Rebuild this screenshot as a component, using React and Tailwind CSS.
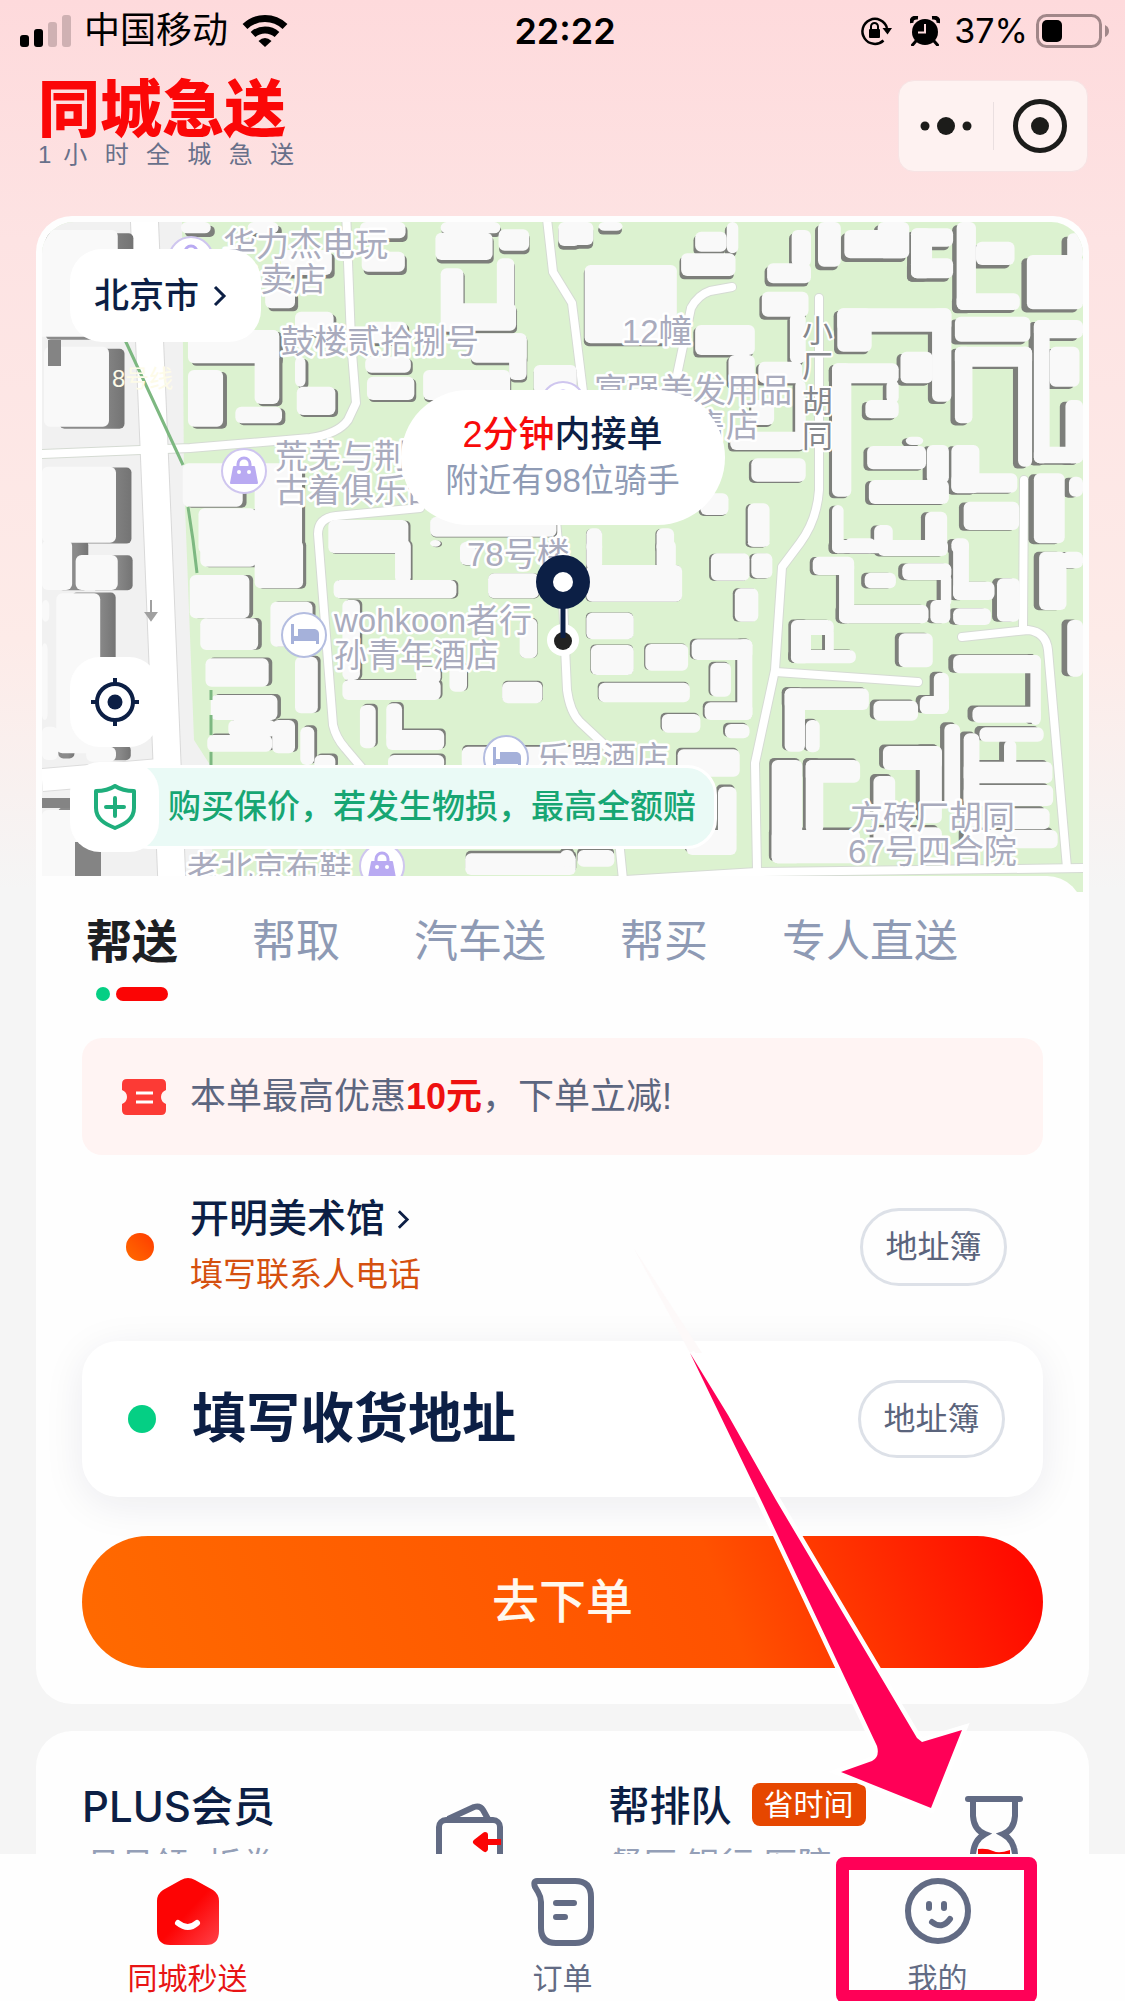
import React, { useState } from "react";

const tabs = ["帮送", "帮取", "汽车送", "帮买", "专人直送"];

// Every tile lists its buildings as [left, top, right, bottom] in tile units
const tiles = [
  {
    x: 30,
    y: 200,
    blocks: [
      [0, 90, 250, 410], [40, 440, 225, 680], [34, 800, 245, 1028], [430, 66, 515, 100], [620, 66, 708, 100],
      [715, 150, 860, 225], [670, 270, 755, 325], [940, 66, 1070, 115], [945, 155, 1068, 215], [1170, 66, 1340, 100],
      [1155, 98, 1318, 180], [1335, 88, 1422, 152], [1170, 205, 1235, 395], [1330, 175, 1380, 340],
      [1180, 310, 1385, 392], [1505, 66, 1568, 138], [1255, 400, 1415, 488], [1365, 400, 1415, 540],
      [1120, 510, 1368, 600], [1435, 495, 1558, 580], [450, 390, 710, 490], [640, 390, 710, 612],
      [450, 510, 550, 680], [585, 620, 718, 670], [755, 335, 865, 405], [755, 470, 785, 560], [760, 560, 870, 645],
      [955, 365, 1075, 430], [955, 470, 1085, 518], [960, 530, 1095, 600], [435, 790, 606, 920],
      [480, 925, 645, 1060], [640, 790, 775, 1060], [850, 960, 1078, 1060], [1140, 950, 1500, 1010],
    ],
  },
  {
    x: 560,
    y: 200,
    blocks: [
      [0, 66, 95, 135], [110, 66, 178, 92], [385, 95, 475, 155], [475, 66, 508, 160], [345, 160, 500, 228],
      [660, 90, 715, 200], [590, 190, 715, 250], [575, 275, 708, 350], [655, 340, 700, 490], [735, 66, 800, 200],
      [810, 90, 990, 175], [905, 66, 995, 175], [1000, 85, 1060, 235], [1000, 85, 1120, 140], [1000, 175, 1120, 235],
      [1130, 66, 1185, 330], [1130, 280, 1310, 330], [1185, 125, 1295, 195], [1330, 165, 1490, 328],
      [1445, 100, 1490, 180], [70, 195, 333, 430], [385, 375, 555, 465], [480, 465, 555, 560], [565, 485, 690, 550],
      [670, 540, 700, 720], [485, 695, 700, 750], [545, 775, 700, 845], [545, 600, 610, 675], [535, 910, 597, 1040],
      [400, 880, 480, 945], [75, 985, 120, 1060], [275, 985, 325, 1060], [790, 325, 1115, 395], [790, 325, 888, 455],
      [1060, 325, 1115, 605], [970, 455, 1062, 550], [775, 490, 965, 550], [775, 490, 830, 890], [930, 540, 965, 610],
      [870, 600, 965, 655], [1125, 350, 1340, 425], [1125, 440, 1345, 500], [1125, 440, 1175, 670],
      [1305, 440, 1345, 800], [1350, 360, 1490, 415], [1350, 360, 1395, 790], [1395, 440, 1480, 560],
      [1440, 600, 1490, 790], [1350, 740, 1490, 790], [985, 710, 1035, 735], [875, 738, 1043, 808],
      [1045, 735, 1108, 850], [880, 840, 1108, 912], [1115, 735, 1195, 880], [1115, 820, 1303, 878],
      [1150, 905, 1308, 990], [1350, 820, 1438, 1030], [1450, 830, 1490, 890], [1040, 935, 1103, 1060],
      [775, 915, 808, 1060], [895, 975, 948, 1060], [810, 1015, 900, 1060], [900, 1025, 1105, 1060],
      [1115, 1015, 1165, 1060],
    ],
  },
  {
    x: 30,
    y: 540,
    blocks: [
      [34, 0, 120, 150], [130, 45, 250, 150], [75, 160, 200, 640], [34, 180, 55, 245], [34, 310, 50, 540],
      [34, 560, 80, 660], [160, 620, 245, 665], [34, 810, 150, 1050], [485, 0, 645, 80], [640, 0, 778, 145],
      [455, 105, 625, 235], [485, 235, 650, 330], [500, 355, 680, 440], [515, 465, 705, 540], [565, 540, 700, 590],
      [505, 585, 690, 635], [690, 540, 755, 640], [685, 185, 805, 320], [755, 350, 820, 520], [770, 560, 810, 675],
      [810, 645, 870, 690], [865, 120, 1215, 175], [1040, 0, 1085, 130], [890, 180, 940, 420], [890, 420, 1170, 480],
      [1195, 370, 1245, 455], [1100, 380, 1170, 430], [940, 495, 985, 625], [1015, 490, 1060, 610],
      [1015, 570, 1180, 630], [1020, 645, 1180, 690], [1395, 235, 1445, 355], [1345, 425, 1460, 490],
      [1230, 620, 1568, 690], [1240, 940, 1555, 1005], [1305, 100, 1450, 175], [1225, 5, 1270, 75],
      [1140, 0, 1170, 20],
    ],
  },
  {
    x: 560,
    y: 540,
    blocks: [
      [75, 0, 120, 90], [275, 0, 330, 90], [75, 75, 348, 185], [430, 40, 540, 122], [545, 40, 605, 115],
      [535, 0, 597, 20], [498, 145, 565, 245], [75, 218, 210, 298], [88, 315, 210, 405], [243, 312, 365, 392],
      [375, 298, 548, 360], [505, 298, 548, 540], [412, 487, 548, 540], [428, 368, 487, 470], [110, 428, 370, 487],
      [290, 522, 400, 578], [470, 552, 540, 595], [335, 628, 512, 710], [450, 740, 503, 900], [360, 870, 503, 945],
      [0, 930, 40, 980], [50, 930, 155, 980], [775, 0, 1105, 40], [905, 0, 1105, 48], [1120, 0, 1165, 180],
      [720, 50, 838, 105], [795, 60, 838, 250], [795, 195, 1050, 250], [868, 98, 957, 145], [975, 70, 1115, 120],
      [1120, 125, 1238, 180], [1055, 180, 1112, 250], [1120, 205, 1228, 255], [1245, 115, 1310, 245],
      [1085, 100, 1115, 200], [1365, 35, 1443, 210], [1430, 35, 1490, 85], [1445, 240, 1490, 410],
      [658, 240, 715, 370], [670, 240, 780, 285], [755, 260, 780, 350], [658, 330, 843, 370], [965, 280, 1062, 382],
      [1120, 345, 1370, 400], [1340, 345, 1370, 555], [1175, 500, 1370, 548], [1195, 562, 1378, 605],
      [1065, 398, 1108, 520], [1025, 468, 1108, 522], [893, 482, 1020, 542], [640, 445, 880, 510],
      [640, 445, 698, 635], [700, 540, 740, 637], [920, 618, 1088, 690], [1025, 618, 1088, 850],
      [1095, 552, 1140, 800], [1150, 580, 1195, 860], [1150, 665, 1403, 730], [1265, 600, 1300, 680],
      [1150, 735, 1405, 798], [1260, 805, 1395, 868], [1150, 870, 1418, 925], [893, 862, 1088, 920],
      [893, 708, 955, 850], [603, 660, 690, 970], [603, 870, 855, 970], [700, 660, 750, 880], [700, 660, 855, 728],
    ],
  },
];

const buildings = tiles.flatMap((tile) =>
  tile.blocks.map(([l, t, r, b]) => ({
    x: tile.x + l * 0.351,
    y: tile.y + t / 3,
    w: (r - l) * 0.351,
    h: (b - t) / 3,
  })),
);

const roads = [
  "M42 454L190 448L310 438Q338 434 348 420L356 403L351 340L346 210",
  "M546 210L553 272L572 303L577 343L584 400",
  "M556 520L563 600L565 647L567 690Q570 712 580 722L610 750L618 830L624 890",
  "M732 287L710 291Q698 295 691 308L677 375",
  "M819 298V490Q817 520 800 543L782 567L775 670L755 763L757 870",
  "M776 672L918 682",
  "M560 884L757 872L1090 868",
  "M1024 480L1023 630M962 637L1028 630Q1046 632 1048 650L1067 868",
  "M420 508L336 516Q318 518 318 534L333 725Q336 738 345 748L372 780",
];

const labels = [
  { x: 223, y: 256, text: "华力杰电玩" },
  { x: 227, y: 291, text: "专卖店" },
  { x: 281, y: 353, text: "鼓楼贰拾捌号" },
  { x: 275, y: 468, text: "荒芜与荆" },
  { x: 275, y: 502, text: "古着俱乐部" },
  { x: 467, y: 566, text: "78号楼" },
  { x: 334, y: 632, text: "wohkoon者行" },
  { x: 334, y: 667, text: "孙青年酒店" },
  { x: 537, y: 770, text: "乐盟酒店" },
  { x: 187, y: 880, text: "老北京布鞋" },
  { x: 622, y: 343, text: "12幢" },
  { x: 594, y: 402, text: "富强美发用品" },
  { x: 660, y: 437, text: "零售店" },
  { x: 850, y: 829, text: "方砖厂胡同" },
  { x: 848, y: 863, text: "67号四合院" },
];

const BagPoi = ({ x, y }) => (
  <g transform={`translate(${x} ${y})`}>
    <circle r="22" fill="#fff" stroke="#cfc6ef" strokeWidth="2" />
    <path d="M-10 -4H10L13 12H-13Z" fill="#b9aaf2" stroke="#b9aaf2" strokeWidth="2" strokeLinejoin="round" />
    <path d="M-6 -2V-7a6 6 0 0 1 12 0V-2" fill="none" stroke="#b9aaf2" strokeWidth="3" />
    <circle cx="-5" cy="1" r="2" fill="#fff" />
    <circle cx="5" cy="1" r="2" fill="#fff" />
  </g>
);

const BedPoi = ({ x, y }) => (
  <g transform={`translate(${x} ${y})`}>
    <circle r="22" fill="#fff" stroke="#b4bde0" strokeWidth="2" />
    <path d="M-13 -11h3v12h4v-7h17q4 1 4 5v10h-3v-3H-10v3h-3Z" fill="#a5b1da" />
  </g>
);

const CityMap = () => (
  <svg
    viewBox="42 222 1041 670"
    preserveAspectRatio="xMidYMid slice"
    className="block w-full h-[670px]"
    role="img"
    aria-label="地图"
  >
    <defs>
      <linearGradient id="wall" x1="0" y1="0" x2="1" y2="0">
        <stop offset="0.6" stopColor="#8b8b8b" />
        <stop offset="1" stopColor="#747474" />
      </linearGradient>
    </defs>
    <rect x="42" y="222" width="1041" height="670" fill="#dcf2d0" />
    <path d="M42 222H182L184 480L194 740L212 768V902H42Z" fill="#f1f1f1" />
    <path d="M144 210L158 540L173 910" fill="none" stroke="#d9d9d9" strokeWidth="29" />
    <path d="M42 780L160 770" fill="none" stroke="#dcdcdc" strokeWidth="24" />
    {roads.map((d) => (
      <path key={d} d={d} fill="none" stroke="#d5dbd3" strokeWidth="10" strokeLinecap="round" strokeLinejoin="round" />
    ))}
    {roads.map((d) => (
      <path key={d} d={d} fill="none" stroke="#fff" strokeWidth="8" strokeLinecap="round" strokeLinejoin="round" />
    ))}
    <path d="M42 780L160 770" fill="none" stroke="#fff" strokeWidth="22" />
    <path d="M144 210L158 540L173 910" fill="none" stroke="#fff" strokeWidth="27" />
    {buildings.map(({ x, y, w, h }, i) => {
      // walls lean towards the middle of the map, the tall blocks are in the west
      const lift = x < 180 ? 0.032 : 0.011;
      return (
        <rect
          key={i}
          x={x + (562 - x - w / 2) * lift}
          y={y + (600 - y - h / 2) * 0.01}
          width={w}
          height={h}
          rx="5"
          fill={x < 180 ? "url(#wall)" : "#7d7f7b"}
        />
      );
    })}
    {buildings.map(({ x, y, w, h }, i) => (
      <rect key={i} x={x} y={y} width={w} height={h} rx="6" fill="#f9f9f9" />
    ))}
    <path d="M48 340h13v26H48ZM42 798h35v10H42ZM75 842h26v50H75Z" fill="#848484" />
    <path
      d="M125 340L183 465M188 507L193 540L197 573M211 690V700M211 715V735M211 752V765"
      fill="none"
      stroke="#7db881"
      strokeWidth="3"
    />
    <path d="M151 600v16m-5 -3l5 7l5 -7Z" fill="#a0a0a0" stroke="#a0a0a0" strokeWidth="2" />

    <BagPoi x={191} y={259} />
    <BagPoi x={244} y={471} />
    <BagPoi x={382} y={866} />
    <BagPoi x={563} y={404} />
    <BedPoi x={304} y={635} />
    <BedPoi x={506} y={758} />

    <g fontSize="33" fill="#a9abbd" stroke="#fff" strokeWidth="5" strokeLinejoin="round" paintOrder="stroke">
      {labels.map((label) => (
        <text key={label.text} x={label.x} y={label.y}>
          {label.text}
        </text>
      ))}
    </g>
    <g fontSize="31" fill="#85878c" stroke="#fff" strokeWidth="4" strokeLinejoin="round" paintOrder="stroke">
      {["小", "厂", "胡", "同"].map((char, i) => (
        <text key={char} x="802" y={342 + i * 35}>
          {char}
        </text>
      ))}
    </g>
    <text x="112" y="387" fontSize="24" fill="#fdfbe8">
      8号线
    </text>

    <circle cx="563" cy="640" r="16" fill="#fff" />
    <circle cx="563" cy="641" r="9" fill="#222" />
    <path d="M563 600V638" stroke="#0c1f45" strokeWidth="5" />
    <circle cx="563" cy="582" r="27" fill="#0c1f45" />
    <circle cx="563" cy="582" r="10" fill="#fff" />
  </svg>
);

const Chevron = ({ className }) => (
  <svg viewBox="0 0 14 22" className={className} fill="none" stroke="currentColor" strokeWidth="3">
    <path d="M2 2L11 11L2 20" />
  </svg>
);

const StatusBar = () => (
  <div className="grid grid-cols-[1fr_auto_1fr] items-center h-[62px] pl-5 pr-[15px] text-black">
    <div className="flex items-center">
      <svg viewBox="0 0 52 34" className="w-[52px] h-[34px]">
        <rect x="0" y="21" width="9" height="12" rx="3" />
        <rect x="14" y="15" width="9" height="18" rx="3" />
        <rect x="28" y="8" width="9" height="25" rx="3" fill="#cfb1b3" />
        <rect x="42" y="1" width="9" height="32" rx="3" fill="#cfb1b3" />
      </svg>
      <span className="ml-3 text-[36px] leading-[44px]">中国移动</span>
      <svg viewBox="0 0 46 34" className="ml-3.5 w-[46px] h-[34px]" fill="none" stroke="#000" strokeWidth="7">
        <path d="M3 12.500A29 29 0 0 1 43 12.500" />
        <path d="M11 20.500A18 18 0 0 1 35 20.500" />
        <path d="M23 33L16.500 27Q23 21 29.500 27Z" fill="#000" stroke="none" />
      </svg>
    </div>
    <span className="font-['Inter',sans-serif] text-[36px] leading-[44px] font-semibold">22:22</span>
    <div className="flex items-center justify-end">
      <svg viewBox="0 0 32 30" className="w-8 h-[30px]" fill="none" stroke="#000" strokeWidth="2.500">
        <path d="M23.500 24.500A12.500 12.500 0 1 1 27 12" />
        <path d="M22.500 12H32L27.500 18.500Z" fill="#000" stroke="none" />
        <rect x="9" y="13" width="11" height="9" rx="1" fill="#000" stroke="none" />
        <path d="M11 14V10.500a3.500 3.500 0 0 1 7 0V14" strokeWidth="2" />
      </svg>
      <svg viewBox="0 0 30 30" className="ml-[18px] w-[30px] h-[30px]">
        <circle cx="15" cy="16" r="13" />
        <path d="M1.500 7Q1 1 8 1.500M28.500 7Q29 1 22 1.500" fill="none" stroke="#000" strokeWidth="4" />
        <path d="M6 25L2.500 29M24 25L27.500 29" stroke="#000" strokeWidth="3" strokeLinecap="round" />
        <path d="M15 8V16.500H8" fill="none" stroke="#fddbdd" strokeWidth="2" />
      </svg>
      <span className="ml-3.5 font-['Inter',sans-serif] text-[34px] leading-[44px]">37%</span>
      <svg viewBox="0 0 74 34" className="ml-2 w-[74px] h-[34px]">
        <rect x="1.500" y="1.500" width="63" height="31" rx="9" fill="none" stroke="#a18789" strokeWidth="3" />
        <rect x="6" y="6" width="20" height="22" rx="5" />
        <path d="M69 11Q73 13 73 17T69 23Z" fill="#a18789" />
      </svg>
    </div>
  </div>
);

const AddressButton = () => (
  <button
    type="button"
    className="shrink-0 w-[147px] h-[78px] rounded-full border-3 border-[#dde1e8] text-[32px] leading-10 text-[#5b647c]"
  >
    地址簿
  </button>
);

const Header = () => (
  <header className="flex items-start justify-between pt-[18px] pb-11 pl-[38px] pr-[37px]">
    <div className="w-[256px]">
      <h1 className="text-[62px] leading-[62px] font-black text-[#fb0707]">同城急送</h1>
      <p className="text-[24px] leading-[26px] text-[#68708a] [text-align-last:justify]">1 小 时 全 城 急 送</p>
    </div>
    <div className="flex items-center w-[190px] h-[92px] rounded-2xl border border-[#f7e3e4] bg-[#fef2f1]">
      <button type="button" aria-label="更多" className="flex flex-1 items-center justify-center">
        <svg viewBox="0 0 52 18" className="w-[52px] h-[18px]" fill="#1c1c1a">
          <circle cx="5" cy="9" r="4.500" />
          <circle cx="26" cy="9" r="9" />
          <circle cx="47" cy="9" r="4.500" />
        </svg>
      </button>
      <span className="w-px h-12 bg-[#eadfe0]" />
      <button type="button" aria-label="关闭" className="flex flex-1 items-center justify-center">
        <svg viewBox="0 0 54 54" className="w-[54px] h-[54px]">
          <circle cx="27" cy="27" r="24.500" fill="none" stroke="#1c1c1a" strokeWidth="5" />
          <circle cx="27" cy="27" r="9" fill="#1c1c1a" />
        </svg>
      </button>
    </div>
  </header>
);

const MapPanel = () => (
  <div className="relative overflow-hidden rounded-t-[32px]">
    <CityMap />
    <button
      type="button"
      className="absolute left-7 top-[27px] flex items-center gap-3.5 h-[93px] px-6 rounded-[32px] bg-white text-[35px] leading-[50px] font-medium text-[#0c1f45]"
    >
      北京市
      <Chevron className="w-[14px] h-[22px] mr-2.5" />
    </button>
    <div className="absolute left-1/2 top-[168px] -translate-x-1/2 flex flex-col items-center justify-center w-[324px] h-[135px] rounded-full bg-white">
      <p className="text-[36px] leading-[46px] font-medium text-[#0c1f45] whitespace-nowrap">
        <span className="text-[#f80b0b]">2分钟</span>内接单
      </p>
      <p className="text-[33px] leading-[46px] text-[#8f9bb5] whitespace-nowrap">附近有98位骑手</p>
    </div>
    <button
      type="button"
      aria-label="定位"
      className="absolute left-7 top-[435px] flex items-center justify-center w-[89px] h-[90px] rounded-[30px] bg-white"
    >
      <svg viewBox="0 0 48 48" className="w-12 h-12" fill="none" stroke="#0c1f45" strokeWidth="4">
        <circle cx="24" cy="24" r="18" />
        <circle cx="24" cy="24" r="7.500" fill="#0c1f45" stroke="none" />
        <path d="M24 0V8M24 40V48M0 24H8M40 24H48" />
      </svg>
    </button>
    <div className="absolute left-7 top-[540px] flex items-center">
      <span className="z-10 flex items-center justify-center w-[89px] h-[90px] rounded-[30px] bg-white">
        <svg
          viewBox="0 0 42 46"
          className="w-[42px] h-[46px]"
          fill="none"
          stroke="#1fae7c"
          strokeWidth="4"
          strokeLinecap="round"
          strokeLinejoin="round"
        >
          <path d="M21 2C27 6 33 7 40 7V24C40 35 31 40 21 44C11 40 2 35 2 24V7C9 7 15 6 21 2Z" />
          <path d="M21 14V32M12 23H30" />
        </svg>
      </span>
      <p className="-ml-10 pl-[46px] pr-[18px] h-[84px] border-3 border-white rounded-[30px] bg-[#eafaf6] text-[33px] leading-[78px] font-medium text-[#17a673] whitespace-nowrap">
        购买保价，若发生物损，最高全额赔
      </p>
    </div>
  </div>
);

const OrderPanel = () => {
  const [active, setActive] = useState(0);

  return (
    <div className="relative -mt-4 px-10 pt-9 pb-[30px] rounded-tr-[36px] rounded-b-[36px] bg-[#fefefe]">
      <div className="flex items-start gap-[74px] h-[89px] px-1 whitespace-nowrap">
        {tabs.map((tab, i) => (
          <button
            key={tab}
            type="button"
            onClick={() => setActive(i)}
            className={
              i === active
                ? "text-[46px] leading-[60px] font-bold text-[#1d2023]"
                : "text-[44px] leading-[60px] text-[#8e9ab4]"
            }
          >
            {tab}
            {i === active && (
              <span className="flex gap-1.5 mt-[15px] ml-2.5">
                <span className="w-3.5 h-3.5 rounded-full bg-[#05cf84]" />
                <span className="w-[52px] h-3.5 rounded-full bg-[#fb0505]" />
              </span>
            )}
          </button>
        ))}
      </div>

      <div className="flex items-center mt-[37px] h-[117px] pl-10 rounded-[20px] bg-[#fff4f3]">
        <svg viewBox="0 0 44 36" className="w-11 h-9">
          <path
            d="M5 0H39Q44 0 44 5V11Q39 13 39 18T44 25V31Q44 36 39 36H5Q0 36 0 31V25Q5 23 5 18T0 11V5Q0 0 5 0Z"
            fill="#fc3a35"
          />
          <path d="M14 14H31M14 23H31" stroke="#fff" strokeWidth="3" />
        </svg>
        <p className="ml-6 text-[36px] leading-[48px] text-[#5d667f]">
          本单最高优惠<strong className="font-bold text-[#ee1010]">10元</strong>，下单立减!
        </p>
      </div>

      <div className="flex items-center mt-9 pl-11 pr-9">
        <span className="w-7 h-7 rounded-full bg-linear-to-bl from-[#ff3800] to-[#ff6a00]" />
        <div className="flex-1 ml-9">
          <a href="#sender" className="flex items-center gap-3 text-[39px] leading-[56px] font-medium text-[#0c1f45]">
            开明美术馆
            <Chevron className="w-[13px] h-[21px]" />
          </a>
          <p className="text-[33px] leading-[56px] text-[#d5500f]">填写联系人电话</p>
        </div>
        <AddressButton />
      </div>

      <div className="flex items-center h-[156px] mt-[38px] pl-[46px] pr-[38px] rounded-[36px] bg-white shadow-[0_8px_40px_rgba(20,30,60,0.08)]">
        <span className="w-7 h-7 rounded-full bg-[#05cf84]" />
        <a href="#receiver" className="flex-1 ml-9 text-[54px] leading-[72px] font-bold text-[#0c1f45]">
          填写收货地址
        </a>
        <AddressButton />
      </div>

      <button
        type="button"
        className="block w-full h-[132px] mt-[39px] rounded-full bg-[linear-gradient(70deg,#ff6a00_0%,#ff5200_66%,#ff0a00_97%)] text-[47px] leading-[64px] font-medium text-[#fff8ee]"
      >
        去下单
      </button>
    </div>
  );
};

const Services = () => (
  <section className="grid grid-cols-2 mx-9 mt-[27px] h-[240px] pt-[48px] rounded-[36px] bg-[#fefefe]">
    <a href="#plus" className="flex justify-between pl-[46px] pr-[59px]">
      <div>
        <h2 className="font-['Inter','Noto_Sans_CJK_SC',sans-serif] text-[42px] leading-[56px] font-medium text-[#0c1f45]">
          PLUS会员
        </h2>
        <p className="mt-1.5 ml-1 text-[34px] leading-[48px] text-[#949fb7]">月月领9折券</p>
      </div>
      <svg viewBox="0 0 68 70" className="w-[68px] h-[70px] mt-6" fill="none" stroke="#626b84" strokeWidth="6">
        <rect x="3" y="17" width="61" height="50" rx="7" />
        <path d="M12 16L38 4Q44 2 47 7L52 16" strokeLinejoin="round" />
        <path d="M65 39H44" stroke="#fb0505" />
        <path d="M49 32L40 39L49 46Z" fill="#fb0505" stroke="#fb0505" strokeLinejoin="round" />
      </svg>
    </a>
    <a href="#queue" className="flex justify-between pl-[46px] pr-[66px]">
      <div>
        <div className="flex items-center gap-5">
          <h2 className="text-[41px] leading-[56px] font-medium text-[#0c1f45]">帮排队</h2>
          <span className="mb-1.5 w-[114px] h-[43px] rounded-lg bg-[#e64700] text-center text-[30px] leading-[43px] text-white">
            省时间
          </span>
        </div>
        <p className="mt-1.5 text-[34px] leading-[48px] text-[#949fb7]">餐厅 银行 医院</p>
      </div>
      <svg
        viewBox="0 0 58 80"
        className="w-[58px] h-20 mt-[17px]"
        fill="none"
        stroke="#626b84"
        strokeWidth="6"
        strokeLinecap="round"
      >
        <path d="M3 3H55" />
        <path d="M8 5V20Q9 34 20 38Q9 44 8 58V76M50 5V20Q49 34 38 38Q49 44 50 58V76" />
        <path d="M13 53Q22 52 28 55T45 54V76H13Z" fill="#fb0505" stroke="none" />
      </svg>
    </a>
  </section>
);

const TabBar = () => (
  <nav className="relative z-10 shrink-0 grid grid-cols-3 h-[147px] pt-[23px] bg-[#fefefe] text-[30px] leading-[44px] text-[#626b84]">
    <a href="#home" className="flex flex-col items-center gap-2.5 text-[#e81414]">
      <svg viewBox="0 0 64 70" className="w-16 h-[70px]">
        <defs>
          <linearGradient id="home" x1="0" y1="0" x2="1" y2="1">
            <stop offset="0.5" stopColor="#fd0404" />
            <stop offset="1" stopColor="#ff4249" />
          </linearGradient>
        </defs>
        <path d="M25 3Q32 -1 39 3L57 13Q63 17 63 24V54Q63 68 50 68H14Q1 68 1 54V24Q1 17 7 13Z" fill="url(#home)" />
        <path d="M22 46Q32 54 41 46" fill="none" stroke="#fff" strokeWidth="6" strokeLinecap="round" />
      </svg>
      同城秒送
    </a>
    <a href="#orders" className="flex flex-col items-center gap-2.5">
      <svg
        viewBox="0 0 64 70"
        className="w-16 h-[70px]"
        fill="none"
        stroke="currentColor"
        strokeWidth="6"
        strokeLinecap="round"
        strokeLinejoin="round"
      >
        <path d="M6 4H44Q60 4 60 20V50Q60 66 44 66H25Q10 66 10 51V25Q10 20 7 15L4 10Q2 4 6 4Z" />
        <path d="M25 26H43M25 40H34" />
      </svg>
      订单
    </a>
    <a href="#mine" className="flex flex-col items-center gap-2.5">
      <svg
        viewBox="0 0 68 70"
        className="w-[68px] h-[70px]"
        fill="none"
        stroke="currentColor"
        strokeWidth="6"
        strokeLinecap="round"
      >
        <circle cx="34" cy="34" r="30" />
        <path d="M25 27V31M40 27V31M28 45Q38 53 46 42" />
      </svg>
      我的
    </a>
    <span className="absolute top-[3px] -bottom-0.5 left-[74.3%] w-[201px] rounded-lg border-[13px] border-[#ff0057]" />
  </nav>
);

export default function App() {
  return (
    <div className="relative flex flex-col h-screen overflow-hidden bg-[#f5f5f5] bg-[linear-gradient(180deg,#fedadc_0px,#fde3e3_240px,#fdebe8_640px,#f5f5f5_890px)] font-['Liberation_Sans','Noto_Sans_CJK_SC',sans-serif]">
      <div className="flex-1 min-h-0 overflow-hidden">
        <StatusBar />
        <Header />
        <main>
          <section className="mx-9 p-1.5 rounded-[36px] bg-[#fefefe]">
            <MapPanel />
            <OrderPanel />
          </section>
          <Services />
        </main>
      </div>
      <TabBar />
      <svg
        viewBox="630 1245 340 570"
        className="absolute z-20 left-[56%] bottom-[186px] w-[340px] h-[570px] pointer-events-none"
        aria-hidden="true"
      >
        <path d="M633 1247L690 1353L702 1353Z" fill="#fdf9f9" />
        <path
          d="M690 1353L728 1415L776 1500L917 1738L922 1742L962 1730L931 1808L841 1772L872 1761Q880 1757 877 1746L761 1500Z"
          fill="#ff0057"
          stroke="#fff"
          strokeWidth="9"
          paintOrder="stroke"
        />
      </svg>
    </div>
  );
}
